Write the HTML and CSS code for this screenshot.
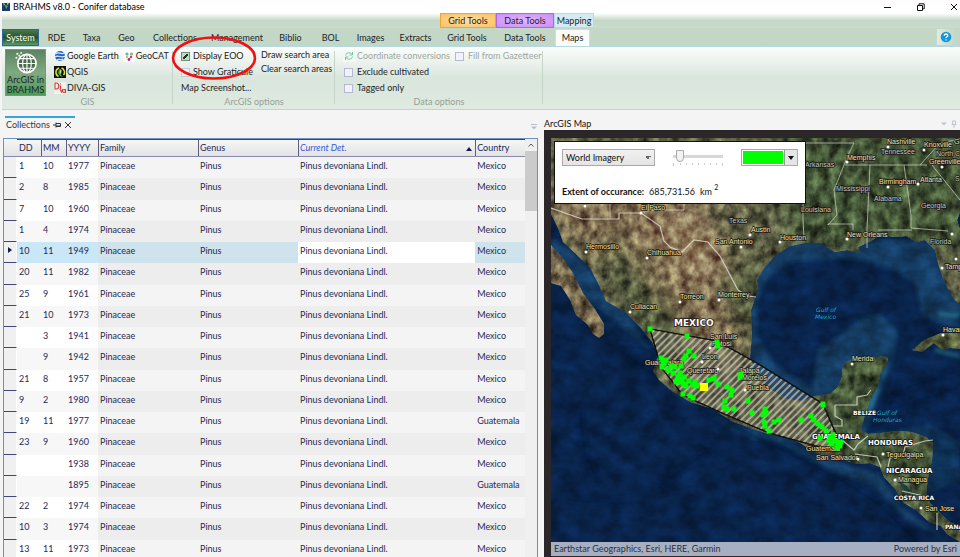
FILE: index.html
```html
<!DOCTYPE html>
<html lang="en">
<head>
<meta charset="utf-8">
<title>BRAHMS v8.0 - Conifer database</title>
<link rel="stylesheet" href="styles.css">
</head>
<body>
<header class="titlebar">
  <svg class="app-icon" viewBox="0 0 8 9"><path fill="#173c5c" d="M0 1h8v8H0z"/><path fill="#d9cf3f" d="M1 1l2 1-1 2zM5 0l2 2-2 1z"/><path fill="#4ba3c7" d="M3 3l3 1-2 3z"/></svg>
  <h1>BRAHMS v8.0 - Conifer database</h1>
  <div class="window-buttons">
    <button aria-label="Minimize"><svg viewBox="0 0 8 8"><path d="M0 4.5h7"/></svg></button>
    <button aria-label="Restore"><svg viewBox="0 0 8 8"><path d="M.5 2.5h5v5h-5zM2 2V.8h5.2v5H6"/></svg></button>
    <button aria-label="Close"><svg viewBox="0 0 8 8"><path d="M1 1l6 6M7 1L1 7"/></svg></button>
  </div>
</header>

<div class="context-row">
  <span class="context grid">Grid Tools</span><span class="context data">Data Tools</span><span class="context mapping">Mapping</span>
</div>

<nav class="tabs">
  <button class="system">System</button>
  <button class="w-short">RDE</button>
  <button class="w-short">Taxa</button>
  <button class="w-short">Geo</button>
  <button class="w-long">Collections</button>
  <button class="w-long">Management</button>
  <button class="w-mid">Biblio</button>
  <button class="w-short">BOL</button>
  <button class="w-mid">Images</button>
  <button class="w-mid">Extracts</button>
  <button class="w-tool">Grid Tools</button>
  <button class="w-tool">Data Tools</button>
  <button class="active">Maps</button>
  <button class="help" aria-label="Help"><svg viewBox="0 0 12 12"><circle cx="6" cy="6" r="5.3" fill="#1797d8"/><path d="M4.2 4.8c0-2.4 3.6-2.3 3.6-.3C7.800 5.700 6 5.700 6 7M6 8.200v1.200" fill="none" stroke="#fff" stroke-width="1.300"/></svg></button>
</nav>

<section class="ribbon">
  <div class="group gis">
    <div class="group-body">
      <button class="arcgis">
        <svg viewBox="0 0 28 26"><circle cx="15" cy="14" r="9.500" fill="#496b4b" stroke="#fff" stroke-width="1.700"/><g fill="none" stroke="#fff" stroke-width="1.200"><ellipse cx="15" cy="14" rx="4.500" ry="9.500"/><path d="M15 4v20M5.500 14h19M7 9h16M7 19h16"/></g><g fill="#fff"><circle cx="5" cy="4" r="1.200"/><circle cx="9" cy="3" r="1"/><circle cx="4" cy="8" r="1"/><circle cx="7" cy="6" r="1"/></g></svg>
        <span>ArcGIS in</span><span>BRAHMS</span>
      </button>
      <div class="stack">
        <div class="line">
          <button><svg viewBox="0 0 12 12"><circle cx="6" cy="6" r="5" fill="#2862c0"/><path d="M1.500 4c3-3 5 1 9-1M1 7c4-3 6 2 10-1M3 10c2-2 4 1 6-1" fill="none" stroke="#dceaff" stroke-width="1.200"/></svg>Google Earth</button>
          <button class="geocat"><svg viewBox="0 0 12 12"><path fill="#fff" d="M0 0h12v12H0z" opacity=".7"/><circle cx="4" cy="4" r="1.600" fill="#4bb5e0"/><circle cx="8.500" cy="4" r="1.600" fill="#8bc34a"/><circle cx="4" cy="7" r="1.200" fill="#f0b62b"/><circle cx="8" cy="7" r="1.300" fill="#d83291"/><circle cx="6" cy="9.500" r="1.400" fill="#b52690"/></svg>GeoCAT</button>
        </div>
        <button><svg viewBox="0 0 12 12"><path fill="#111" d="M0 0h12v12H0z"/><path d="M5 2C1 3 1 9 4.500 10.500M7.500 2c3 1 4 5 2 7" stroke="#d8e33c" stroke-width="1.500" fill="none"/><path d="M5 3l3 1-1 5 2 2-3-1-2-3z" fill="#4fa83d"/><path d="M6 3l1 3-1 2z" fill="#f0f0c0"/></svg>QGIS</button>
        <button><svg viewBox="0 0 12 12"><path fill="#fff" opacity=".5" d="M0 0h12v12H0z"/><g fill="none" stroke="#d83a3a" stroke-width="1.100"><path d="M1 1v6h1.500c3 0 3-6 0-6zM6.500 3.500V7M6.500 1.500v1M6 7l1.500 3L9 7M11.500 7v4"/><circle cx="10" cy="9" r="1.500"/></g></svg>DIVA-GIS</button>
      </div>
    </div>
    <h2>GIS</h2>
  </div>
  <div class="group options">
    <div class="group-body">
      <div class="stack">
        <label class="line"><input type="checkbox" checked>Display EOO</label>
        <label class="line"><input type="checkbox">Show Graticule</label>
        <button>Map Screenshot...</button>
      </div>
      <div class="stack tight">
        <button>Draw search area</button>
        <button>Clear search areas</button>
      </div>
    </div>
    <h2>ArcGIS options</h2>
    <svg class="annotation" viewBox="0 0 88 46"><ellipse cx="44" cy="23" rx="41" ry="20.500" fill="none" stroke="#f01010" stroke-width="2.600"/></svg>
  </div>
  <div class="group data-options">
    <div class="group-body stack">
      <div class="line">
        <button disabled><svg viewBox="0 0 12 12"><path fill="#f5faf6" d="M0 0h12v12H0z"/><path d="M2.500 5.500a3.500 3.500 0 0 1 6.500-1M9.500 2v3h-3M9.500 6.500a3.500 3.500 0 0 1-6.500 1M2.500 10V7h3" fill="none" stroke="#76c79d"/></svg>Coordinate conversions</button>
        <label class="line off"><input type="checkbox" disabled>Fill from Gazetteer</label>
      </div>
      <label class="line"><input type="checkbox">Exclude cultivated</label>
      <label class="line"><input type="checkbox">Tagged only</label>
    </div>
    <h2>Data options</h2>
  </div>
</section>

<main>
  <section class="collections">
    <div class="doc-tabs">
      <div class="doc-tab">Collections
        <button aria-label="Pin"><svg viewBox="0 0 8 8"><path d="M0 4h3M3 1.500v5M3 2.500h4.500v3H3M3 5h4"/></svg></button>
        <button aria-label="Close tab"><svg viewBox="0 0 8 8"><path d="M1 1l6 6M7 1L1 7"/></svg></button>
      </div>
      <svg class="menu-mark" viewBox="0 0 8 8"><path d="M1 1.500h6" stroke="#b8bec8"/><path d="M1 3.500h6L4 6.500z" fill="#b8bec8"/></svg>
    </div>
    <div class="grid-frame">
      <table>
        <colgroup><col class="c-mark"><col class="c-dd"><col class="c-mm"><col class="c-yy"><col class="c-fam"><col class="c-fam"><col class="c-det"><col class="c-cty"></colgroup>
        <thead><tr><th></th><th>DD</th><th>MM</th><th>YYYY</th><th>Family</th><th>Genus</th><th class="sorted">Current Det.<svg viewBox="0 0 6 4"><path d="M0 4l3-4 3 4z"/></svg></th><th>Country</th></tr></thead>
        <tbody>
          <tr><td></td><td>1</td><td>10</td><td>1977</td><td>Pinaceae</td><td>Pinus</td><td>Pinus devoniana Lindl.</td><td>Mexico</td></tr>
          <tr><td></td><td>2</td><td>8</td><td>1985</td><td>Pinaceae</td><td>Pinus</td><td>Pinus devoniana Lindl.</td><td>Mexico</td></tr>
          <tr><td></td><td>7</td><td>10</td><td>1960</td><td>Pinaceae</td><td>Pinus</td><td>Pinus devoniana Lindl.</td><td>Mexico</td></tr>
          <tr><td></td><td>1</td><td>4</td><td>1974</td><td>Pinaceae</td><td>Pinus</td><td>Pinus devoniana Lindl.</td><td>Mexico</td></tr>
          <tr class="current"><td><svg viewBox="0 0 4 6"><path d="M0 0l4 3-4 3z"/></svg></td><td>10</td><td>11</td><td>1949</td><td>Pinaceae</td><td>Pinus</td><td>Pinus devoniana Lindl.</td><td>Mexico</td></tr>
          <tr><td></td><td>20</td><td>11</td><td>1982</td><td>Pinaceae</td><td>Pinus</td><td>Pinus devoniana Lindl.</td><td>Mexico</td></tr>
          <tr><td></td><td>25</td><td>9</td><td>1961</td><td>Pinaceae</td><td>Pinus</td><td>Pinus devoniana Lindl.</td><td>Mexico</td></tr>
          <tr><td></td><td>21</td><td>10</td><td>1973</td><td>Pinaceae</td><td>Pinus</td><td>Pinus devoniana Lindl.</td><td>Mexico</td></tr>
          <tr><td></td><td></td><td>3</td><td>1941</td><td>Pinaceae</td><td>Pinus</td><td>Pinus devoniana Lindl.</td><td>Mexico</td></tr>
          <tr><td></td><td></td><td>9</td><td>1942</td><td>Pinaceae</td><td>Pinus</td><td>Pinus devoniana Lindl.</td><td>Mexico</td></tr>
          <tr><td></td><td>21</td><td>8</td><td>1957</td><td>Pinaceae</td><td>Pinus</td><td>Pinus devoniana Lindl.</td><td>Mexico</td></tr>
          <tr><td></td><td>9</td><td>2</td><td>1980</td><td>Pinaceae</td><td>Pinus</td><td>Pinus devoniana Lindl.</td><td>Mexico</td></tr>
          <tr><td></td><td>19</td><td>11</td><td>1977</td><td>Pinaceae</td><td>Pinus</td><td>Pinus devoniana Lindl.</td><td>Guatemala</td></tr>
          <tr><td></td><td>23</td><td>9</td><td>1960</td><td>Pinaceae</td><td>Pinus</td><td>Pinus devoniana Lindl.</td><td>Mexico</td></tr>
          <tr><td></td><td></td><td></td><td>1938</td><td>Pinaceae</td><td>Pinus</td><td>Pinus devoniana Lindl.</td><td>Mexico</td></tr>
          <tr><td></td><td></td><td></td><td>1895</td><td>Pinaceae</td><td>Pinus</td><td>Pinus devoniana Lindl.</td><td>Guatemala</td></tr>
          <tr><td></td><td>22</td><td>2</td><td>1974</td><td>Pinaceae</td><td>Pinus</td><td>Pinus devoniana Lindl.</td><td>Mexico</td></tr>
          <tr><td></td><td>10</td><td>3</td><td>1974</td><td>Pinaceae</td><td>Pinus</td><td>Pinus devoniana Lindl.</td><td>Mexico</td></tr>
          <tr><td></td><td>13</td><td>11</td><td>1973</td><td>Pinaceae</td><td>Pinus</td><td>Pinus devoniana Lindl.</td><td>Mexico</td></tr>
        </tbody>
      </table>
      <div class="scrollbar"><svg viewBox="0 0 8 8"><path d="M1.500 5.500L4 3l2.500 2.500" fill="none" stroke="#555"/></svg><div class="thumb"></div></div>
    </div>
  </section>

  <section class="map-pane">
    <div class="map-title"><h2>ArcGIS Map</h2>
      <svg viewBox="0 0 20 8"><path d="M1 2.500h6L4 5.500z" fill="#bcc5d3"/><path d="M12.500 4.500V1h3v3.500M11.500 4.500h5M14 5v3" stroke="#bcc5d3" fill="none"/></svg>
    </div>
    <div class="map-frame">
      <svg class="map" viewBox="551 138 409 404" preserveAspectRatio="xMinYMin slice">
        <defs>
          <filter id="terrain" x="0" y="0" width="1" height="1" color-interpolation-filters="sRGB"><feTurbulence type="fractalNoise" baseFrequency=".1 .08" numOctaves="5" seed="8"/><feColorMatrix values=".9 0 0 0 0  .9 0 0 0 0  .9 0 0 0 0  0 0 0 0 1" result="n"/><feBlend in="n" in2="SourceGraphic" mode="overlay"/><feComposite in2="SourceGraphic" operator="in"/></filter>
          <filter id="seabed" x="0" y="0" width="1" height="1" color-interpolation-filters="sRGB"><feTurbulence type="fractalNoise" baseFrequency=".05 .07" numOctaves="5" seed="3"/><feColorMatrix values=".4 0 0 0 .26  .4 0 0 0 .26  .4 0 0 0 .26  0 0 0 0 1" result="n"/><feBlend in="n" in2="SourceGraphic" mode="overlay"/></filter>
          <filter id="soft" x="-20%" y="-20%" width="140%" height="140%"><feGaussianBlur stdDeviation="2"/></filter>
          <filter id="blend" x="-50%" y="-50%" width="200%" height="200%"><feGaussianBlur stdDeviation="12"/></filter>
          <pattern id="hatch" width="5" height="5" patternUnits="userSpaceOnUse" patternTransform="rotate(45)"><path d="M1 0v5" stroke="#d0d0c8" stroke-width="1.300"/></pattern>
          <path id="land" d="M551 138H960V212L957 220 960 230V305L954 299 948 289 942 276 938 263 935 250 925 240 916 242 906 236 895 237 880 235 871 241 858 247 860 253 847 250 835 252 820 243 805 243 790 246 775 256 765 267 757 280 758 290 751 310 752 335 750 358 757 374 770 389 787 399 803 401 815 396 830 394 838 387 842 377 843 365 850 360 866 359 880 356 888 358 886 366 880 374 878 386 871 398 865 414 861 430 868 434 881 433 895 431 912 432 926 437 933 443 932 460 928 478 926 493 930 503 942 515 950 522 960 526V542L947 534 941 526 929 522 916 510 904 503 895 489 884 477 880 467 870 463 856 464 836 457 817 454 800 443 784 436 769 434 750 428 731 421 713 409 690 402 672 391 659 380 653 371 656 363 658 354 652 342 640 327 625 312 606 301 597 281 590 268 577 255 563 242 558 228 551 214Z"/>
          <clipPath id="landclip"><use href="#land"/></clipPath>
        </defs>
        <g filter="url(#seabed)">
          <path fill="#0a2650" d="M551 138h409v404H551z"/>
          <g filter="url(#soft)" fill="#164069">
            <path d="M750 280L790 240H960V330L922 316 915 285 900 272 870 262 840 258 790 262 768 278 758 300 757 335 775 365 812 388 818 350 840 335 862 318 880 314 898 332 893 360 874 410 864 440H750Z"/>
            <path d="M551 238L570 247 630 318 650 350 640 342 602 310 551 275ZM650 374L680 398 735 426 800 446 855 468 880 474 902 508 950 542 905 518 873 485 826 470 790 447 735 432Z"/>
            <path d="M860 435L930 425 958 440 960 480 925 495Z" opacity=".7"/>
          </g>
          <g fill="none" stroke="#061a3b" stroke-width="3" opacity=".7" filter="url(#soft)"><path d="M700 410L770 444 835 476 880 505 920 545M580 410l5 45 14 26M570 500l60 4M620 350l40 30M870 430l30-40 60-20M890 410l70-23M655 490l60-45"/></g>
        </g>
        <g fill="none" stroke="#3fb2bf" stroke-width="2" filter="url(#soft)" opacity=".8"><path d="M878 388l-6 14-5 12M885 370l-3 8M938 314l18 2 4-3M935 350l25 6"/></g>
        <g filter="url(#terrain)">
          <use href="#land" fill="#68694c"/>
          <g clip-path="url(#landclip)"><g filter="url(#blend)"><path fill="#8d7b5b" d="M540 180H700L745 290 740 360 690 350 635 270 590 260 540 210Z"/><path fill="#4a5b3a" d="M770 120H980V250H790ZM590 240l30 5 65 90 10 30-40-30-50-80ZM800 430l40-80h60v70l60 40v90l-90-70ZM722 280l30-20v100Z"/><path fill="#9c8968" d="M650 215l50 5 30 40-20 20-50-30Z"/></g></g>
          <path fill="#857758" d="M551 245L562 257 573 273 583 293 595 309 604 324 604 334 599 338 593 334 588 325 576 315 570 300 561 286 551 283Z"/>
          <path fill="#59613d" d="M912 350l12-10 17-7h19v16l-10-1-8 2-8-7-12 9Z"/>
        </g>
        <g fill="#1a3f47"><path d="M900 482l7 4 6 7-7-1-5-6Z"/></g>
        <g fill="none" stroke="#e2dfd3" stroke-width="1.200" opacity=".8">
          <path d="M551 208L582 219H619V213H641L660 226 664 241 670 247 682 252 694 240 708 242 720 256 731 277 738 290 748 296 756 297M835 405h22v-8l10-2 4-5M835 405v11l7 4v6h-10v12M842 440l12 10 4-6 10-8M855 454l22 3 4 10M888 467l2-9 13-3 2-8 20-6 8-1M902 491l22 5M937 513v17"/>
          <path d="M610 203v16M684 203v7h-43M806 143h48l-6 12M845 165h82M806 194h-3v25M846 160l-12 30 3 25-9 10v-1h25v6M870 165l-3 65v18M904 165l7 50v13l37 3M878 230h34M803 219l1 20M920 165l20-22 20-4M932 165l28 35" stroke-width=".800"/>
        </g>
        <g stroke="#111" stroke-width="1.200"><path fill="#625a42" fill-opacity=".25" d="M650 329L717 341 755 362 823 404 839 441 843 447 835 451 769 433 722 413 683 395 661 367Z"/><path fill="url(#hatch)" d="M650 329L717 341 755 362 823 404 839 441 843 447 835 451 769 433 722 413 683 395 661 367Z"/></g>
        <g class="places">
          <text x="887" y="144">Nashville</text><text x="924" y="147">Knoxville</text><text x="954" y="144">Gr</text><text x="929" y="164">Greenville</text><text x="847" y="160">Memphis</text><text x="879" y="184">Birmingham</text><text x="920" y="182">Atlanta</text><text x="847" y="237">New Orleans</text><text x="780" y="240">Houston</text><text x="751" y="232">Austin</text><text x="715" y="244">San Antonio</text><text x="641" y="210">El Paso</text><text x="586" y="249">Hermosillo</text><text x="647" y="255">Chihuahua</text><text x="630" y="309">Culiacan</text><text x="680" y="299">Torreon</text><text x="718" y="297">Monterrey</text><text x="710" y="339">San Luis</text><text x="712" y="346">Potosi</text><text x="702" y="359">Leon</text><text x="645" y="365">Guadalajara</text><text x="687" y="373">Queretaro</text><text x="739" y="373">Jalapa</text><text x="742" y="380">Morelos</text><text x="747" y="390">Puebla</text><text x="852" y="361">Merida</text><text x="945" y="269">Tampa</text><text x="943" y="332">Havana</text><text x="806" y="451">Guatemala</text><text x="816" y="460">San Salvador</text><text x="886" y="457">Tegucigalpa</text><text x="898" y="482">Managua</text><text x="925" y="511">San Jose</text>
        </g>
        <g class="states"><text x="805" y="167">Arkansas</text><text x="881" y="154">Tennessee</text><text x="936" y="156">North Carolina</text><text x="836" y="191">Mississippi</text><text x="874" y="201">Alabama</text><text x="921" y="208">Georgia</text><text x="801" y="212">Louisiana</text><text x="729" y="223">Texas</text><text x="930" y="244">Florida</text><text x="955" y="181">South</text></g>
        <g class="countries"><text class="mexico" x="674" y="326">MEXICO</text><text class="small" x="853" y="415">BELIZE</text><text x="812" y="439">GUATEMALA</text><text x="868" y="445">HONDURAS</text><text x="886" y="473">NICARAGUA</text><text class="small" x="894" y="500">COSTA RICA</text><text class="small" x="945" y="529">PANAMA</text></g>
        <g class="waters"><text x="816" y="312">Gulf of</text><text x="815" y="319">Mexico</text><text x="877" y="415">Gulf of</text><text x="873" y="422">Honduras</text></g>
        <path class="cities" d="M585 206h0M641 213h0M586 252h0M647 258h0M630 312h0M680 302h0M719 300h0M750 235h0M741 247h0M780 242h0M847 162h0M847 239h0M888 147h0M924 150h0M942 167h0M888 187h0M918 184h0M952 234h0M956 259h0M942 268h0M943 335h0M852 364h0M710 348h0M702 362h0M718 369h0M745 390h0M858 459h0M883 454h0M895 480h0M921 508h0"/>
        <path class="finds" d="M650 329h0M687 336h0M717 342h0M718 346h0M689 351h0M686 356h0M694 356h0M684 359h0M661 358h0M663 361h0M666 360h0M664 364h0M662 367h0M668 370h0M671 366h0M675 367h0M681 366h0M673 373h0M680 373h0M678 377h0M682 379h0M676 382h0M680 382h0M684 377h0M684 384h0M689 381h0M686 386h0M695 382h0M697 386h0M693 385h0M709 380h0M713 379h0M718 384h0M714 378h0M727 387h0M732 390h0M731 395h0M725 401h0M724 407h0M727 409h0M734 409h0M741 374h0M740 377h0M683 394h0M690 396h0M693 398h0M748 401h0M752 413h0M765 409h0M766 413h0M763 415h0M764 422h0M765 426h0M769 431h0M774 422h0M779 420h0M801 420h0M811 416h0M814 420h0M818 424h0M822 427h0M826 431h0M820 438h0M830 437h0M833 438h0M829 441h0M832 444h0M836 441h0M838 444h0M837 448h0M840 446h0M833 435h0M841 442h0M823 405h0M823 404h0"/>
        <path fill="#ff0" d="M700 383h8v8h-8z"/>
      </svg>
      <form class="map-panel">
        <div class="map-controls">
          <select aria-label="Base map"><option>World Imagery</option></select>
          <div class="slider"><input type="range" aria-label="Opacity" min="0" max="100" value="6"><svg viewBox="0 0 50 3" preserveAspectRatio="none"><path d="M.500 0v3M7.500 0v2M13.500 0v2M19.500 0v2M25.500 0v2M31.500 0v2M37.500 0v2M43.500 0v2M49.500 0v3" stroke="#ccc"/></svg></div>
          <button type="button" class="colour" aria-label="Fill colour"><span class="swatch"></span><span class="drop"><svg viewBox="0 0 6 4"><path d="M0 0h6L3 4z"/></svg></span></button>
        </div>
        <p><b>Extent of occurance:</b><span>685,731.56</span><span>km <sup>2</sup></span></p>
      </form>
      <footer><span>Earthstar Geographics, Esri, HERE, Garmin</span><span>Powered by Esri</span></footer>
    </div>
  </section>
</main>
</body>
</html>
```
FILE: styles.css
```css
* { box-sizing: border-box; }
body {
  margin: 0;
  height: 100vh;
  display: flex;
  flex-direction: column;
  overflow: hidden;
  background: #f4f4f4;
  font: 9px/12px Lato, "Open Sans", sans-serif;
  color: #1c231e;
}
h1, h2, p { margin: 0; font: inherit; }
button { padding: 0; border: 0; background: none; font: inherit; color: inherit; }
button svg { fill: none; stroke: #333; }

.titlebar { display: flex; align-items: center; height: 13px; background: #fff; padding-left: 2px; color: #000; }
.app-icon { width: 8px; height: 9px; margin-right: 3px; }
.window-buttons { display: flex; gap: 25px; margin-left: auto; padding-right: 2px; }
.window-buttons button { display: flex; }
.window-buttons svg { width: 8px; height: 8px; stroke: #111; }

.context-row {
  display: flex;
  height: 15px;
  margin-left: 2px;
  padding-left: 438px;
  background: linear-gradient(#fff, #c5d8c8 50%, #c8dbcc);
}
.context { border: 1px solid; text-align: center; line-height: 14px; }
.context.grid { width: 56px; background: radial-gradient(#ffe1ac, #fcc05e); border-color: #f0a62f; }
.context.data { width: 58px; background: radial-gradient(#dfb8ff, #cb8df8); border-color: #ad68e0; }
.context.mapping { width: 40px; background: #d3ebf2; border-color: #b6dbe7; }

.tabs {
  display: flex;
  align-items: flex-end;
  height: 19px;
  margin-left: 2px;
  background: #c3d7c7;
  border-bottom: 1px solid #b5d7e2;
}
.tabs button { height: 16px; line-height: 14px; }
.tabs .system {
  width: 37px;
  height: 17px;
  color: #fff;
  background: linear-gradient(#4d7650, #1f5424 50%, #5f9663);
  border: 1px solid #2c66a0;
}
.w-short { width: 35px; }
.w-long { width: 62px; }
.w-mid { width: 45px; }
.w-tool { width: 58px; }
.tabs .active { width: 35px; height: 17px; margin-left: 1px; background: #fafcfa; border: 1px solid #c6e2e8; border-bottom: 0; border-radius: 2px 2px 0 0; }
.tabs .help { display: flex; align-items: center; justify-content: center; width: 18px; margin: 0 5px 1px auto; background: linear-gradient(90deg, #e2ebe4, #c3d7c7); }
.help svg { width: 12px; height: 12px; stroke: none; }

.ribbon {
  display: flex;
  height: 63px;
  margin-left: 2px;
  background: linear-gradient(#fbfdfb, #e9efea 30%, #d9e6dc 50%, #dfeae1);
  border-bottom: 1px solid #c5d4c8;
}
.group { position: relative; display: flex; flex-direction: column; height: 60px; }
.group::after { content: ""; position: absolute; right: 0; top: 4px; bottom: 3px; width: 1px; background: #c4d5c8; }
.group h2 { margin-top: auto; text-align: center; color: #969f99; line-height: 10px; }
.gis { width: 171px; }
.options { width: 162px; }
.data-options { width: 208px; }
.group-body { display: flex; }
.stack { display: flex; flex-direction: column; align-items: flex-start; padding-top: 1px; }
.group .line, .stack > button { display: flex; align-items: center; height: 16px; white-space: nowrap; }
.line button { display: flex; align-items: center; }
.stack button svg { width: 12px; height: 12px; margin-right: 1px; flex: none; stroke: none; }
.gis .stack { padding-left: 8px; }
.geocat { margin-left: 4px; }
.arcgis { width: 41px; height: 47px; margin: 2px 0 0 3px; line-height: 10px; border: 1px solid #769a78; background: linear-gradient(#5d8360, #7fa982 50%, #4c9a5a); display: flex; flex-direction: column; align-items: center; }
.arcgis svg { width: 28px; height: 26px; stroke: none; }
.options .group-body { padding-left: 8px; gap: 8px; }
.options .tight > button { height: 14px; }
.data-options .group-body { padding-left: 8px; }
.data-options button svg { margin-right: 2px; }
.data-options .off { margin-left: 4px; }
.data-options button:disabled, .off { color: #9da8a0; }
input[type="checkbox"] { appearance: none; flex: none; width: 9px; height: 9px; margin: 0 4px 0 1px; border: 1px solid #b2b9d3; background: #f2f3fa; }
input[type="checkbox"]:checked { border-color: #6f8f78; background: linear-gradient(135deg, transparent 35%, #163c20 35%, #163c20 65%, transparent 65%) center / 5px 5px no-repeat, #c3dac9; }
.options input { margin: 0 3px 0 0; }
.options input:not(:checked) { opacity: .6; }
.annotation { position: absolute; left: -3px; top: -12px; width: 88px; height: 46px; pointer-events: none; }

main { flex: 1; min-height: 0; display: grid; grid-template: minmax(0, 1fr) / 9fr 7fr; }
.collections { min-width: 0; display: flex; flex-direction: column; padding: 6px 2px 0 3px; }
.doc-tabs { display: flex; justify-content: space-between; align-items: center; height: 22px; }
.doc-tab { display: flex; gap: 3px; align-items: center; align-self: flex-start; height: 16px; margin-left: 2px; padding: 0 3px 0 1px; border-top: 2px solid #35a6dc; color: #33384a; }
.doc-tab button { display: flex; }
.doc-tab svg, .menu-mark { width: 8px; height: 8px; }
.grid-frame { flex: 1; min-height: 0; display: flex; overflow: hidden; border: 1px solid #6a91c4; border-bottom: 0; background: #eee; color: #262a55; }
table { flex: 1; align-self: flex-start; table-layout: fixed; border-collapse: separate; border-spacing: 0; }
.c-mark { width: 13px; }
.c-dd { width: 24px; }
.c-mm { width: 25px; }
.c-yy { width: 32px; }
.c-fam { width: 19.2%; }
.c-det { width: 34%; }
th, td { padding: 0 0 0 2px; overflow: hidden; white-space: nowrap; text-align: left; font-weight: 400; }
th { height: 18px; background: linear-gradient(#f6f6f6, #e3e3e5); border-bottom: 1px solid #878aa8; border-top: 1px solid #3a4477; box-shadow: inset 1px 0 #5a5e86; }
th:first-child, th:nth-child(2) { box-shadow: none; }
th:first-child { border-top: 0; }
th.sorted { color: #315dd6; font-style: italic; }
.sorted svg { float: right; width: 6px; height: 4px; margin: 5px 3px 0 0; fill: #111b4c; }
td { height: 21px; padding-bottom: 4px; background: #f4f4f4; }
tr:nth-child(4n+2) td { height: 22px; }
tr:nth-child(even) td { background: #ededed; }
td:nth-child(-n+4), tr:nth-child(odd) td:nth-child(-n+4) { background: #fff; }
tr:nth-child(even) td:nth-child(-n+4) { background: #f7f7f7; }
tr td:first-child, tr:nth-child(n) td:first-child { background: #f0f0f0; border-bottom: 1px solid #424676; border-right: 1px solid #fff; padding-left: 4px; }
tr.current:nth-child(n) td:nth-child(n+2) { background: #cfe3ec; }
tr.current:nth-child(n) td:nth-child(n+2):nth-child(-n+4) { background: #c9e7f6; }
tr.current:nth-child(n) td:nth-child(7) { background: #fff; }
td svg { display: block; width: 4px; height: 6px; fill: #111b4c; }
.scrollbar { width: 12px; background: #f0f0f0; }
.scrollbar svg { display: block; width: 8px; height: 12px; margin: 0 auto; }
.thumb { height: 60px; background: #cbcbcb; }

.map-pane { min-width: 0; display: flex; flex-direction: column; padding-left: 4px; }
.map-title { display: flex; justify-content: space-between; align-items: center; height: 20px; padding-top: 7px; color: #111; }
.map-title svg { width: 20px; height: 8px; }
.map-frame { position: relative; flex: 1; min-height: 0; display: flex; flex-direction: column; padding: 8px 0 1px 7px; background: #2b2627; }
.map { flex: 1; min-height: 0; width: 100%; display: block; }
.places, .states, .countries { font: 7px "Liberation Sans", sans-serif; fill: #f7e3b9; stroke: #1b1710; stroke-width: 1.5px; paint-order: stroke; }
.states { fill: #c7cac2; }
.countries { font: bold 7px "DejaVu Sans", sans-serif; fill: #fff; }
.countries .mexico { font-size: 9px; }
.countries .small { font-size: 6px; }
.waters { font: italic 6px "DejaVu Sans", sans-serif; fill: #26a3cf; }
.cities { stroke: #fff; stroke-width: 3px; stroke-linecap: round; }
.finds { stroke: #0f0; stroke-width: 5px; stroke-linecap: square; }
.map-panel { position: absolute; left: 10px; top: 11px; width: 252px; max-width: 90%; padding: 7px 7px 5px; border: 1px solid #111; background: #fff; color: #111; }
.map-controls { display: flex; align-items: center; justify-content: space-between; }
select { width: 93px; height: 17px; padding: 0 3px; border: 1px solid #a9a9a9; border-radius: 0; appearance: none; font: inherit; color: inherit; background: linear-gradient(45deg, transparent 50%, #666 50%) right 6px center / 3px 3px no-repeat, linear-gradient(135deg, #666 50%, transparent 50%) right 3px center / 3px 3px no-repeat, linear-gradient(#f1f1f1, #e4e4e4); }
.slider { display: flex; flex-direction: column; width: 50px; }
.slider svg { width: 50px; height: 3px; }
.slider input { appearance: none; width: 50px; height: 13px; margin: 0; background: linear-gradient(#d8d8d8, #d8d8d8) center / 100% 3px no-repeat; }
.slider input::-webkit-slider-thumb { appearance: none; width: 8px; height: 12px; border: 1px solid #aaa; border-radius: 0 0 4px 4px; background: #f3f3f3; }
.colour { display: flex; width: 57px; height: 17px; border: 1px solid #aaa; }
.swatch { flex: 1; margin: 1px; background: #0f0; }
.drop { display: flex; align-items: center; justify-content: center; width: 13px; border-left: 1px solid #999; background: #e5e5e5; }
.drop svg { width: 6px; height: 4px; fill: #111; stroke: none; }
.map-panel p { display: flex; gap: 5px; align-items: flex-end; height: 31px; margin-top: 1px; }
sup { font-size: 7px; line-height: 0; vertical-align: 5px; }
.map-frame footer { display: flex; justify-content: space-between; height: 14px; padding: 0 3px; background: #a7b0c3; color: #2b3039; line-height: 14px; }
```
